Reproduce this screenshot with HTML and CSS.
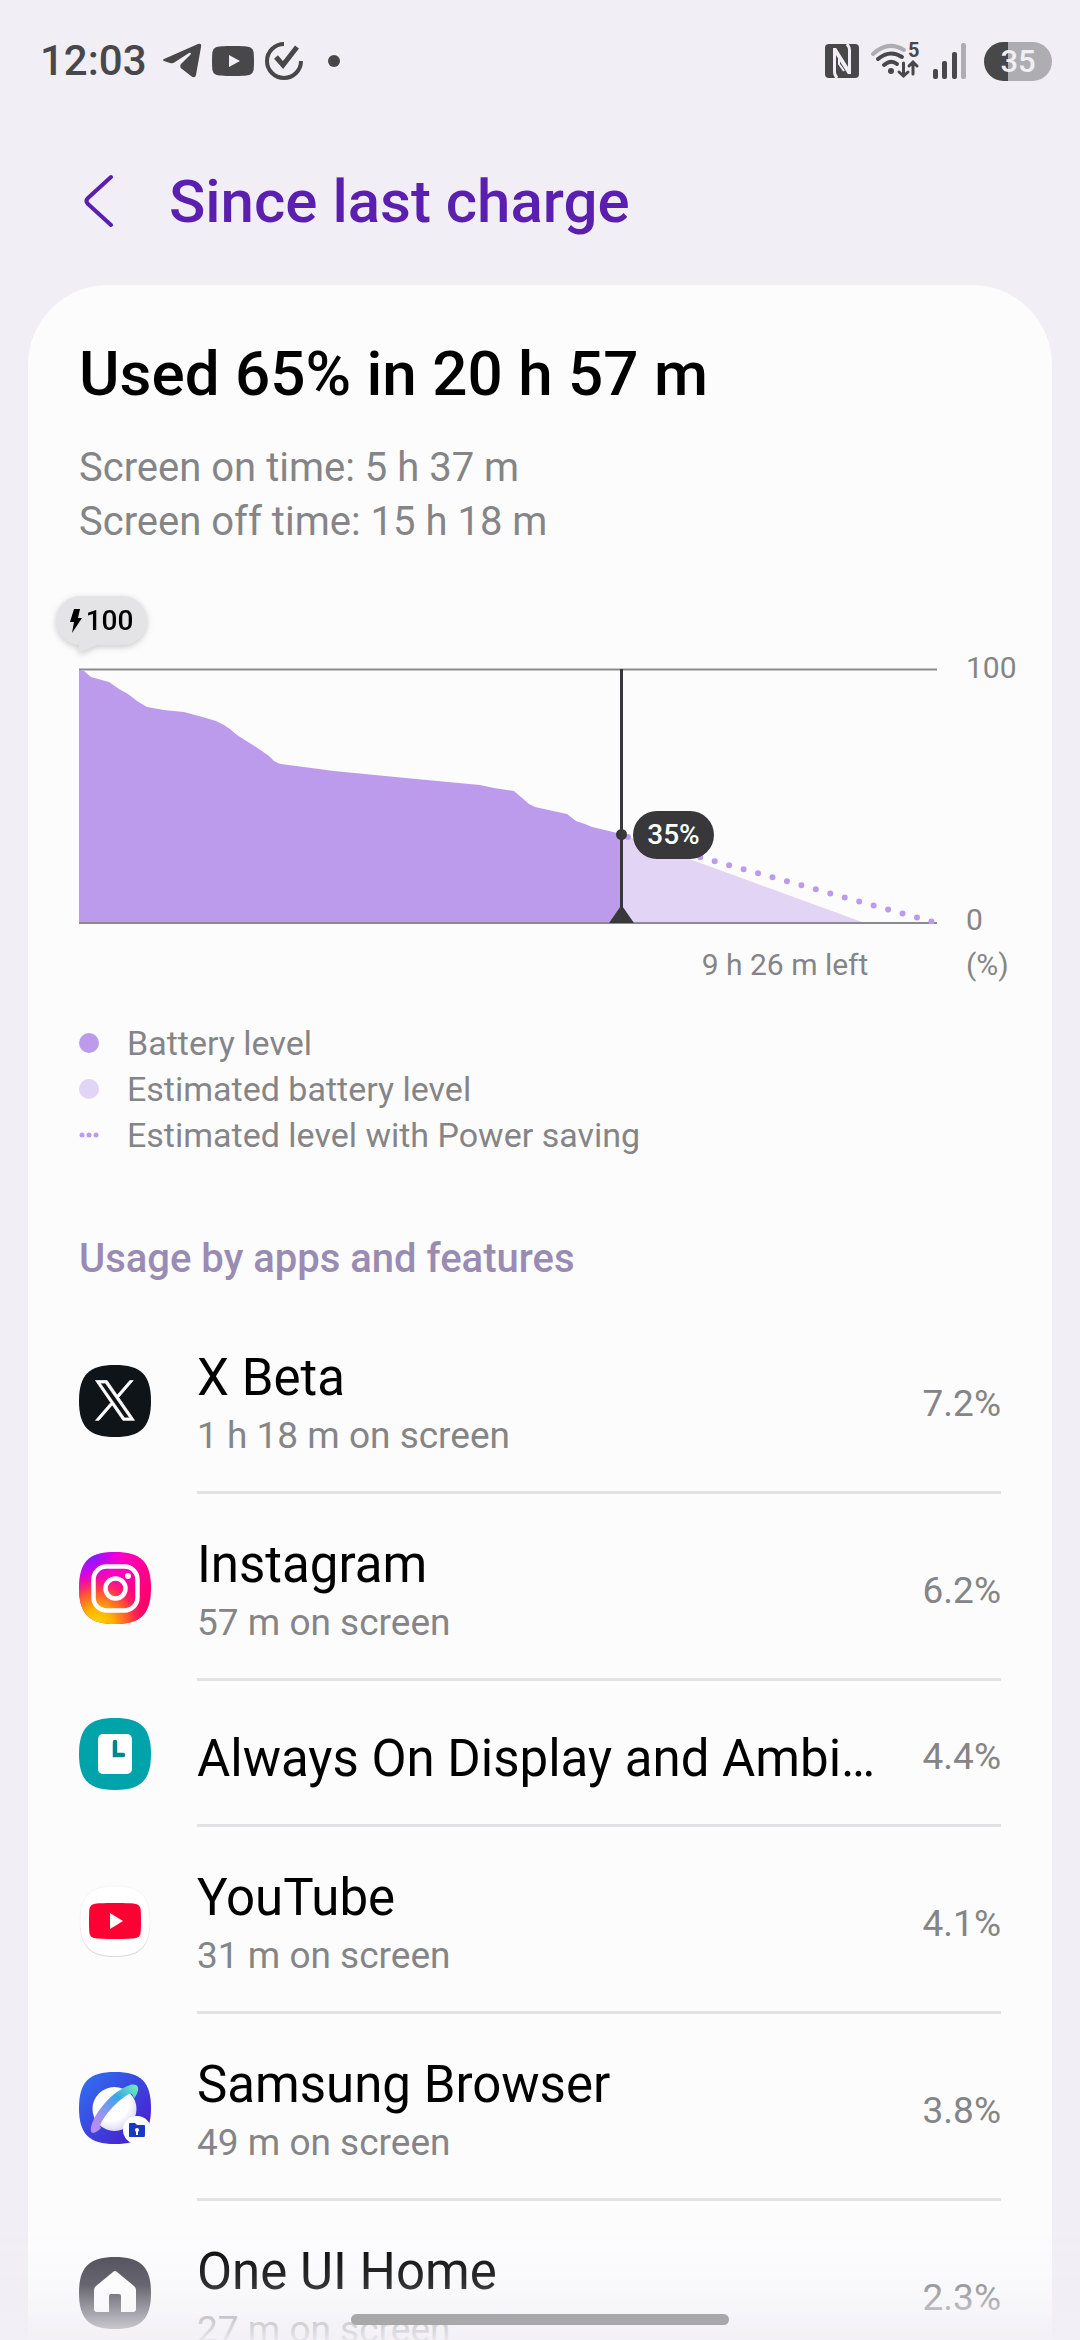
FILE: index.html
```html
<!DOCTYPE html>
<html lang="en">
<head>
  <meta charset="UTF-8">
  <meta name="viewport" content="width=device-width, initial-scale=1.0">
  <title>Since last charge</title>
  <link rel="stylesheet" href="styles.css">
</head>
<body>
  <div class="screen">
    <!-- System status bar -->
    <div class="status-bar">
      <div class="status-left">
        <span class="clock">12:03</span>
        <svg class="telegram-icon" width="40" height="36" viewBox="0 0 40 36">
          <path d="M2 16L36 1Q40 0 39 4L34 32Q33 36 29 33L20 26Q17 24 19 21L29 11Q29 9 27 10L13 19Q11 21 8 20L2 18Q0 17 2 16Z" fill="#48474a"/>
        </svg>
        <svg width="42" height="30" viewBox="0 0 42 30">
          <path d="M21 0C31 0 36 .4 38 1.200Q41 2.500 41.600 6Q42 10 42 15T41.600 24Q41 27.500 38 28.800C36 29.600 31 30 21 30S6 29.600 4 28.800Q1 27.500.4 24Q0 20 0 15T.4 6Q1 2.500 4 1.200C6 .4 11 0 21 0ZM17 9V21L28 15Z" fill="#48474a"/>
        </svg>
        <svg width="40" height="40" viewBox="0 0 40 40" fill="none" stroke="#48474a" stroke-width="4">
          <path d="M20 3A17 17 0 1 0 37 20"/>
          <path d="M12 16L19 24L33 6" stroke-width="5"/>
        </svg>
        <span class="more-dot"></span>
      </div>
      <div class="status-right">
        <svg class="nfc-icon" width="34" height="34" viewBox="0 0 34 34">
          <rect width="34" height="34" rx="4" fill="#48474a"/>
          <g fill="none" stroke="#f1eff5">
            <path d="M9.500 4V28Q9.500 31 12 34M24.500 30V6Q24.500 3 22 0" stroke-width="3"/>
            <path d="M9.500 5L24.500 29" stroke-width="4"/>
            <path d="M14 15V20L19 27" stroke-width="2"/>
          </g>
        </svg>
        <svg class="wifi-icon" width="50" height="36" viewBox="0 0 50 36" fill="none" stroke="#48474a" stroke-width="4" stroke-linecap="round">
          <path d="M2 11Q17-3 33 7" stroke="#aeadb1"/>
          <path d="M7 16Q19 6 31 14"/>
          <path d="M13 22Q20 16 26 21"/>
          <circle cx="20" cy="28" r="3" fill="#48474a" stroke="none"/>
          <path d="M32.500 20V33M28 29L32.500 33L37 29M42 31V19M38 23L42 19L46 23" stroke-width="3"/>
          <text class="wifi-band" x="37" y="14">5</text>
        </svg>
        <svg width="34" height="36" viewBox="0 0 34 36" fill="#48474a">
          <rect x="0" y="26" width="5" height="10" rx="2"/>
          <rect x="9" y="18" width="5" height="18" rx="2"/>
          <rect x="19" y="9" width="5" height="27" rx="2"/>
          <rect x="28" y="0" width="5" height="36" rx="2" fill="#aeadb1"/>
        </svg>
        <span class="battery">35</span>
      </div>
    </div>

    <header class="page-header">
      <button class="back-btn" type="button" aria-label="Back">
        <svg width="30" height="54" viewBox="0 0 30 54" fill="none" stroke="#5a1fae" stroke-width="4" stroke-linecap="round" stroke-linejoin="round">
          <path d="M27 3L4 24Q1 27 4 30L27 51"/>
        </svg>
      </button>
      <h1>Since last charge</h1>
    </header>

    <main class="card">
      <h2 class="used">Used 65% in 20 h 57 m</h2>
      <p class="times">Screen on time: 5 h 37 m<br>Screen off time: 15 h 18 m</p>

      <!-- Battery chart -->
      <section class="chart">
        <div class="plot">
          <svg class="plot-svg" viewBox="0 0 858 256">
            <path d="M0 255V2L5 3L12 9L30 14L40 21L49 26L58 33L68 39L85 42L105 44L127 50L137 53Q144 56 151 61L158 67L169 74L180 81L190 88L195 93Q198 95 202 96L255 103L337 111L401 117L415 120L435 123L442 129L450 136L456 139L465 141L474 143L488 146L497 153L506 156L513 159L530 163L542 166V255Z" fill="#bd9bec"/>
            <path d="M542 166L786 255H542Z" fill="#e2d4f5"/>
            <path d="M0 1.500H858M0 255H858" stroke="#8b8b8f" stroke-width="2"/>
            <path d="M549 169L854 254" stroke="#bd9bec" stroke-width="6" stroke-linecap="round" stroke-dasharray="0 15"/>
            <path d="M542.500 1V250" stroke="#38373a" stroke-width="3"/>
            <circle cx="542.500" cy="166.500" r="5.500" fill="#38373a"/>
            <path d="M542.500 237L555 255H530Z" fill="#38373a"/>
          </svg>
          <span class="charge-bubble">
            <svg width="12" height="24" viewBox="0 0 12 24"><path d="M4 0H10L8 9H12L2 24L4 13H0Z"/></svg>100
          </span>
          <span class="level-pill">35%</span>
        </div>
        <div class="axis">
          <span>100</span>
          <span>0</span>
        </div>
        <div class="time-left">9 h 26 m left</div>
        <div class="unit">(%)</div>
      </section>

      <ul class="legend">
        <li><span class="dot"></span>Battery level</li>
        <li><span class="dot dot-light"></span>Estimated battery level</li>
        <li>
          <svg width="20" height="20" viewBox="0 0 20 20" fill="#bd9bec"><circle cx="3" cy="10" r="2.500"/><circle cx="10" cy="10" r="2.500"/><circle cx="17" cy="10" r="2.500"/></svg>Estimated level with Power saving
        </li>
      </ul>

      <h3 class="usage-title">Usage by apps and features</h3>

      <ul class="apps">
        <li class="app">
          <svg class="app-icon" viewBox="0 0 72 72">
            <path d="M36 0C62 0 72 10 72 36S62 72 36 72 0 62 0 36 10 0 36 0Z" fill="#0f1419"/>
            <path transform="translate(16.500 15.500) scale(.0325)" fill="#fff" stroke="#fff" stroke-width="22" d="M714.163 519.284L1160.890 0H1055.030L667.137 450.887L357.328 0H0L468.492 681.821L0 1226.370H105.866L515.491 750.218L842.672 1226.370H1200L714.137 519.284H714.163ZM569.165 687.828L521.697 619.934L144.011 79.694H306.615L611.412 515.685L658.880 583.579L1055.080 1150.300H892.476L569.165 687.854V687.828Z"/>
          </svg>
          <div class="app-body">
            <div class="app-text">
              <div class="app-name">X Beta</div>
              <div class="app-time">1 h 18 m on screen</div>
            </div>
            <span class="app-percent">7.2%</span>
          </div>
        </li>
        <li class="app">
          <svg class="app-icon" viewBox="0 0 72 72">
            <defs>
              <linearGradient id="ig-base" x1="0" y1="0" x2="1" y2="0.600">
                <stop offset="0" stop-color="#c800ff"/>
                <stop offset="0.450" stop-color="#ff00c8"/>
                <stop offset="1" stop-color="#ff0069"/>
              </linearGradient>
              <radialGradient id="ig-warm" cx="0.250" cy="1" r="0.750">
                <stop offset="0" stop-color="#ffd600"/>
                <stop offset="0.300" stop-color="#ffb000"/>
                <stop offset="0.600" stop-color="#ff5a28" stop-opacity="0.900"/>
                <stop offset="1" stop-color="#ff0069" stop-opacity="0"/>
              </radialGradient>
              <radialGradient id="ig-cool" cx="0.150" cy="0" r="0.450">
                <stop offset="0" stop-color="#5b2bff"/>
                <stop offset="1" stop-color="#c800ff" stop-opacity="0"/>
              </radialGradient>
            </defs>
            <path d="M36 0C62 0 72 10 72 36S62 72 36 72 0 62 0 36 10 0 36 0Z" fill="url(#ig-base)"/>
            <path d="M36 0C62 0 72 10 72 36S62 72 36 72 0 62 0 36 10 0 36 0Z" fill="url(#ig-cool)"/>
            <path d="M36 0C62 0 72 10 72 36S62 72 36 72 0 62 0 36 10 0 36 0Z" fill="url(#ig-warm)"/>
            <g fill="none" stroke="#fff" stroke-width="4.500">
              <rect x="14.500" y="14.500" width="44" height="44" rx="13"/>
              <circle cx="36.500" cy="36.500" r="10"/>
            </g>
            <circle cx="49" cy="24" r="3" fill="#fff"/>
          </svg>
          <div class="app-body">
            <div class="app-text">
              <div class="app-name">Instagram</div>
              <div class="app-time">57 m on screen</div>
            </div>
            <span class="app-percent">6.2%</span>
          </div>
        </li>
        <li class="app">
          <svg class="app-icon" viewBox="0 0 72 72">
            <path d="M36 0C62 0 72 10 72 36S62 72 36 72 0 62 0 36 10 0 36 0Z" fill="#00a3aa"/>
            <rect x="19" y="16" width="34" height="40" rx="5" fill="#fff"/>
            <path d="M36 24V37H44" fill="none" stroke="#04868d" stroke-width="4.500" stroke-linecap="round"/>
          </svg>
          <div class="app-body">
            <div class="app-text">
              <div class="app-name">Always On Display and Ambi…</div>
            </div>
            <span class="app-percent">4.4%</span>
          </div>
        </li>
        <li class="app">
          <svg class="app-icon" viewBox="0 0 72 72">
            <path d="M36 2C61 2 71 12 71 37S61 72 36 72 1 62 1 37 11 2 36 2Z" fill="#d4d4d6"/>
            <path d="M36 1C61 1 71 11 71 36S61 71 36 71 1 61 1 36 11 1 36 1Z" fill="#fff" stroke="#ececee" stroke-width=".5"/>
            <path d="M36 18C48 18 54 18.300 57 19Q61 20 61.600 24Q62 28 62 36T61.600 48Q61 52 57 53C54 53.700 48 54 36 54S18 53.700 15 53Q11 52 10.400 48Q10 44 10 36T10.400 24Q11 20 15 19C18 18.300 24 18 36 18Z" fill="#ff0033"/>
            <path d="M31 28V44L44 36Z" fill="#fff"/>
          </svg>
          <div class="app-body">
            <div class="app-text">
              <div class="app-name">YouTube</div>
              <div class="app-time">31 m on screen</div>
            </div>
            <span class="app-percent">4.1%</span>
          </div>
        </li>
        <li class="app">
          <svg class="app-icon" viewBox="0 0 72 72">
            <defs>
              <linearGradient id="sb-bg" x1="0" y1="0" x2="1" y2="1">
                <stop offset="0" stop-color="#2f74f5"/>
                <stop offset="1" stop-color="#4a14c8"/>
              </linearGradient>
              <linearGradient id="sb-ring" x1="0" y1="1" x2="1" y2="0">
                <stop offset="0" stop-color="#c08af0"/>
                <stop offset="0.300" stop-color="#9a93f0"/>
                <stop offset="0.650" stop-color="#38a5ec"/>
                <stop offset="1" stop-color="#74f5ae"/>
              </linearGradient>
              <radialGradient id="sb-planet" cx="0.400" cy="0.350" r="0.700">
                <stop offset="0.600" stop-color="#fff"/>
                <stop offset="1" stop-color="#d9d2f5"/>
              </radialGradient>
            </defs>
            <path d="M36 0C62 0 72 10 72 36S62 72 36 72 0 62 0 36 10 0 36 0Z" fill="url(#sb-bg)"/>
            <circle cx="35.500" cy="37" r="22" fill="url(#sb-planet)"/>
            <path d="M12 59C10 50 28 21 51 13C60 11 62 17 55 27C54 23 53 21 50 22C40 27 24 44 21 54L22 56C18 60 13 63 12 59Z" fill="url(#sb-ring)"/>
            <circle cx="58" cy="58" r="14" fill="#fff"/>
            <path d="M50 52Q50 51 51 51H56L58 53H65Q66 53 66 54V63Q66 65 65 65H51Q50 65 50 64Z" fill="#1739c4"/>
            <circle cx="58" cy="58" r="2" fill="#fff"/>
            <path d="M58 58V63" stroke="#fff" stroke-width="2"/>
          </svg>
          <div class="app-body">
            <div class="app-text">
              <div class="app-name">Samsung Browser</div>
              <div class="app-time">49 m on screen</div>
            </div>
            <span class="app-percent">3.8%</span>
          </div>
        </li>
        <li class="app">
          <svg class="app-icon" viewBox="0 0 72 72">
            <path d="M36 0C62 0 72 10 72 36S62 72 36 72 0 62 0 36 10 0 36 0Z" fill="#45444f"/>
            <path d="M34 15Q36 13 38 15L55 29Q57 31 57 33V52Q57 55 54 55H42V39Q42 37 40 37H32Q30 37 30 39V55H18Q15 55 15 52V33Q15 31 17 29Z" fill="#fff"/>
          </svg>
          <div class="app-body">
            <div class="app-text">
              <div class="app-name">One UI Home</div>
              <div class="app-time">27 m on screen</div>
            </div>
            <span class="app-percent">2.3%</span>
          </div>
        </li>
      </ul>
    </main>
  </div>
  <div class="bottom-fade"></div>
  <div class="nav-handle"></div>
</body>
</html>
```

FILE: styles.css
```css
* {
  box-sizing: border-box;
}
body {
  background-color: #f1eff5;
  font-family: Roboto, "Liberation Sans", sans-serif;
  margin: 0;
  color: #000;
}
h1, h2, h3, p, ul {
  margin: 0;
  padding: 0;
}
ul {
  list-style: none;
}
svg {
  display: block;
  flex: none;
}
.screen {
  height: 100vh;
  overflow: hidden;
}
/* Status bar */
.status-bar {
  display: flex;
  justify-content: space-between;
  align-items: center;
  padding: 36px 28px 31px 40px;
}
.status-left, .status-right {
  display: flex;
  align-items: center;
  height: 50px;
  gap: 12px;
}
.status-left {
  gap: 10px;
}
.clock {
  font-size: 42px;
  line-height: 50px;
  font-weight: 500;
  color: #48474a;
  margin-right: 5px;
}
.more-dot {
  width: 12px;
  height: 12px;
  margin-left: 14px;
  border-radius: 50%;
  background-color: #48474a;
}
.wifi-icon {
  overflow: visible;
}
.wifi-band {
  font-size: 20px;
  font-weight: 700;
  fill: #48474a;
  stroke: none;
}
.battery {
  width: 68px;
  height: 39px;
  margin-left: 5px;
  border-radius: 20px;
  background: linear-gradient(to right, #48474a 35%, #aeadb1 35%);
  color: #f1eff5;
  font-size: 31px;
  line-height: 39px;
  font-weight: 500;
  text-align: center;
}
/* Page header */
.page-header {
  display: flex;
  align-items: center;
  height: 168px;
  padding: 0 84px;
  gap: 55px;
}
.back-btn {
  padding: 0;
  border: none;
  background: none;
  cursor: pointer;
}
.page-header h1 {
  font-size: 60px;
  font-weight: 500;
  color: #5a1fae;
}
/* Card */
.card {
  margin: 0 28px;
  padding: 51px 51px 0;
  background-color: #fcfcfd;
  border-radius: 80px 80px 0 0;
}
.used {
  font-size: 62px;
  line-height: 76px;
  font-weight: 500;
}
.times {
  margin-top: 29px;
  font-size: 40px;
  line-height: 54px;
  color: #858587;
}
/* Battery chart */
.chart {
  display: grid;
  grid-template-columns: 1fr 50px;
  column-gap: 29px;
  margin: 119px -15px 0 0;
  font-size: 30px;
  line-height: 36px;
  color: #858587;
}
.plot {
  position: relative;
}
.plot-svg {
  width: 100%;
}
.charge-bubble {
  position: absolute;
  left: -23px;
  top: -72px;
  display: flex;
  align-items: center;
  justify-content: center;
  gap: 4px;
  width: 91px;
  height: 49px;
  border-radius: 25px;
  background-color: #e4e3e6;
  filter: drop-shadow(0 2px 3px rgba(0, 0, 0, 0.2));
  font-size: 28px;
  font-weight: 500;
  color: #000;
}
.charge-bubble::after {
  content: "";
  position: absolute;
  left: 23px;
  top: 48px;
  width: 20px;
  height: 9px;
  background-color: #e4e3e6;
  clip-path: polygon(0 0, 100% 0, 0 100%);
}
.level-pill {
  position: absolute;
  left: 64.6%;
  top: 56%;
  padding: 0 14px;
  border-radius: 24px;
  background-color: #38373a;
  color: #fff;
  font-size: 28px;
  line-height: 48px;
  font-weight: 500;
}
.axis {
  display: flex;
  flex-direction: column;
  justify-content: space-between;
  margin: -18px 0 -14px;
}
.time-left, .unit {
  margin-top: 23px;
}
.time-left {
  padding-right: 8%;
  text-align: right;
}
/* Legend */
.legend {
  margin-top: 37px;
  font-size: 34px;
  line-height: 46px;
  color: #858587;
}
.legend li {
  display: flex;
  align-items: center;
  gap: 28px;
}
.dot {
  width: 20px;
  height: 20px;
  border-radius: 50%;
  background-color: #bd9bec;
}
.dot-light {
  background-color: #e2d4f5;
}
/* App list */
.usage-title {
  margin-top: 77px;
  font-size: 40px;
  line-height: 48px;
  font-weight: 500;
  color: #9a8bb2;
}
.apps {
  margin-top: 24px;
}
.app {
  display: flex;
  align-items: center;
  gap: 46px;
}
.app-icon {
  width: 72px;
  height: 72px;
}
.app-body {
  flex: 1;
  display: flex;
  align-items: center;
  justify-content: space-between;
  min-height: 146px;
  padding: 36px 0 28px;
  border-bottom: 3px solid #e2e2e4;
}
.app:last-child .app-body {
  border-bottom: none;
}
.app-text {
  padding-top: 4px;
}
.app-name {
  font-size: 51px;
  line-height: 62px;
}
.app-time {
  font-size: 37px;
  line-height: 54px;
  color: #858587;
}
.app-percent {
  font-size: 37px;
  color: #858587;
}
/* Fade behind the navigation handle */
.bottom-fade {
  position: fixed;
  left: 0;
  right: 0;
  bottom: 0;
  height: 110px;
  background: linear-gradient(to bottom, rgba(241, 239, 245, 0), rgba(241, 239, 245, 0.2) 50%, rgba(241, 239, 245, 0.7) 85%, rgba(241, 239, 245, 0.9));
}
.nav-handle {
  position: fixed;
  left: 50%;
  bottom: 15px;
  width: 35%;
  height: 11px;
  border-radius: 6px;
  background-color: #a8a7aa;
  transform: translateX(-50%);
}
```
